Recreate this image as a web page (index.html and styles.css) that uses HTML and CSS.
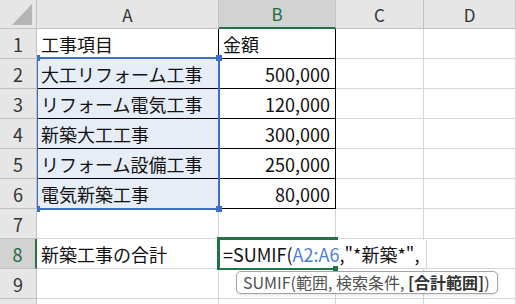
FILE: index.html
```html
<!DOCTYPE html>
<html lang="ja">
<head>
<meta charset="utf-8">
<title>SUMIF</title>
<link rel="stylesheet" href="styles.css">
</head>
<body>
<div class="sheet">
  <div class="corner"><svg class="tri" width="37" height="29" viewBox="0 0 37 29"><polygon points="12,25 32,25 32,4" fill="#b4b4b4"/></svg></div>
  <div class="colhead">A</div>
  <div class="colhead sel">B</div>
  <div class="colhead">C</div>
  <div class="colhead">D</div>

  <div class="rowhead">1</div>
  <div class="cell tb">工事項目</div>
  <div class="cell tb">金額</div>
  <div class="cell"></div>
  <div class="cell"></div>

  <div class="rowhead">2</div>
  <div class="cell tb hl">大工リフォーム工事</div>
  <div class="cell tb num">500,000</div>
  <div class="cell"></div>
  <div class="cell"></div>

  <div class="rowhead">3</div>
  <div class="cell tb hl">リフォーム電気工事</div>
  <div class="cell tb num">120,000</div>
  <div class="cell"></div>
  <div class="cell"></div>

  <div class="rowhead">4</div>
  <div class="cell tb hl">新築大工工事</div>
  <div class="cell tb num">300,000</div>
  <div class="cell"></div>
  <div class="cell"></div>

  <div class="rowhead">5</div>
  <div class="cell tb hl">リフォーム設備工事</div>
  <div class="cell tb num">250,000</div>
  <div class="cell"></div>
  <div class="cell"></div>

  <div class="rowhead">6</div>
  <div class="cell tb hl">電気新築工事</div>
  <div class="cell tb num">80,000</div>
  <div class="cell"></div>
  <div class="cell"></div>

  <div class="rowhead">7</div>
  <div class="cell"></div>
  <div class="cell"></div>
  <div class="cell"></div>
  <div class="cell"></div>

  <div class="rowhead sel">8</div>
  <div class="cell">新築工事の合計</div>
  <div class="cell"></div>
  <div class="cell"></div>
  <div class="cell"></div>

  <div class="rowhead">9</div>
  <div class="cell"></div>
  <div class="cell"></div>
  <div class="cell"></div>
  <div class="cell"></div>

  <div class="rowhead"></div>
  <div class="cell"></div>
  <div class="cell"></div>
  <div class="cell"></div>
  <div class="cell"></div>

  <div class="selection"></div>
  <div class="handle h-tl"></div>
  <div class="handle h-tr"></div>
  <div class="handle h-bl"></div>
  <div class="handle h-br"></div>

  <div class="active"></div>
  <div class="editor">=SUMIF(<span class="ref">A2:A6</span>,"*新築*",</div>
  <div class="fill"></div>

  <div class="tip">SUMIF(範囲, 検索条件, <b>[合計範囲]</b>)</div>
</div>
</body>
</html>
```
FILE: styles.css
```css
html, body {
  margin: 0;
  padding: 0;
  background: #ffffff;
  overflow: hidden;
}

.sheet {
  position: relative;
  display: grid;
  grid-template-columns: 37px 182px 117px 88px 92px;
  grid-template-rows: 29px repeat(10, 30px);
  width: 516px;
  height: 304px;
  overflow: hidden;
  font-family: "Noto Sans CJK JP", "Noto Sans", sans-serif;
  color: #111;
}

.corner,
.colhead,
.rowhead {
  box-sizing: border-box;
  background: #e6e6e6;
  border-right: 1px solid #c2c2c2;
  border-bottom: 1px solid #c2c2c2;
  color: #333;
  font-size: 17px;
  display: flex;
  align-items: center;
  justify-content: center;
  line-height: 20px;
  position: relative;
  z-index: 2;
}

.corner {
  display: block;
}

.tri {
  display: block;
}

.colhead {
  padding-top: 1px;
}

.colhead.sel {
  background: #d2d2d2;
  color: #1e6b3e;
  border-bottom: 2px solid #217346;
}

.rowhead {
  font-size: 18px;
}

.rowhead.sel {
  background: #d2d2d2;
  color: #1e6b3e;
  border-right: 2px solid #217346;
}

.cell {
  box-sizing: border-box;
  border-right: 1px solid #d6d6d6;
  border-bottom: 1px solid #d6d6d6;
  font-size: 18px;
  line-height: 22px;
  display: flex;
  align-items: center;
  padding: 1px 0 0 4px;
  white-space: nowrap;
  overflow: hidden;
}

.cell.tb {
  border-right-color: #000;
  border-bottom-color: #000;
}

.cell.hl {
  background: #e7edf7;
}

.cell.num {
  justify-content: flex-end;
  padding-right: 5px;
}

.selection {
  position: absolute;
  left: 36px;
  top: 57px;
  width: 184px;
  height: 153px;
  box-sizing: border-box;
  border: 2px solid #3d70c4;
  z-index: 1;
}

.handle {
  position: absolute;
  width: 6px;
  height: 6px;
  background: #3d70c4;
  z-index: 3;
}

.h-tl { left: 37px; top: 55px; width: 3px; }
.h-tr { left: 216px; top: 55px; }
.h-bl { left: 37px; top: 206px; width: 3px; }
.h-br { left: 216px; top: 206px; }

.active {
  position: absolute;
  left: 217px;
  top: 237px;
  width: 121px;
  height: 33px;
  box-sizing: border-box;
  border: 3px solid #217346;
  border-bottom-width: 2px;
  z-index: 3;
}

.editor {
  position: absolute;
  left: 220px;
  top: 240px;
  width: 207px;
  height: 28px;
  box-sizing: border-box;
  background: #ffffff;
  border-right: 1px solid #d6d6d6;
  padding: 3px 0 0 3px;
  font-size: 18px;
  line-height: 22px;
  white-space: nowrap;
  color: #111;
  z-index: 4;
}

.ref {
  color: #4a7fd6;
}

.fill {
  position: absolute;
  left: 333px;
  top: 266px;
  width: 5px;
  height: 5px;
  background: #217346;
  z-index: 5;
}

.tip {
  position: absolute;
  left: 236px;
  top: 271px;
  width: 262px;
  height: 23px;
  box-sizing: border-box;
  border: 1px solid #a3a3a3;
  border-radius: 5px;
  background: #ffffff;
  box-shadow: 0 1px 3px rgba(0, 0, 0, 0.12);
  padding: 0 0 0 6px;
  font-size: 16px;
  line-height: 20px;
  color: #505050;
  white-space: nowrap;
  z-index: 6;
}

.tip b {
  color: #333;
  font-weight: 700;
}
```
